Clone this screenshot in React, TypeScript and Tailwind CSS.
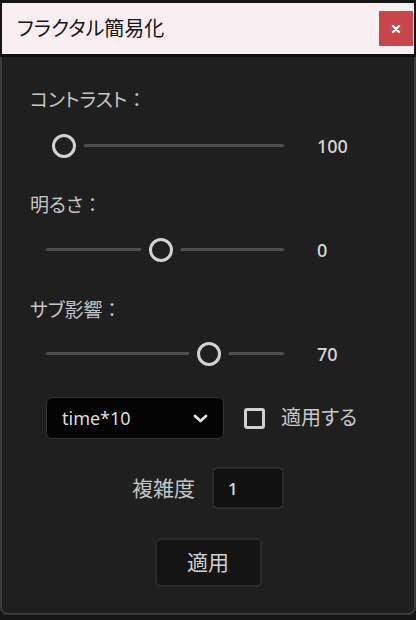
const FONT = "[font-family:'Noto_Sans','Noto_Sans_CJK_JP',sans-serif] [font-feature-settings:'palt']"

interface SliderRowProps {
  fraction: number
  value: string
}

/** Track is 238px wide; thumb centre travels from 18px to 220px */
function SliderRow({ fraction, value }: SliderRowProps) {
  const left = 18 + fraction * 202
  return (
    <div className="flex h-[30px] items-center pl-[44px]">
      <div className="relative h-[30px] w-[238px]">
        <div className="absolute left-0 right-0 top-[13px] h-[3px] rounded-full bg-[#4e4e4e]" />
        <div
          className="absolute top-[3px] h-[24px] w-[24px] -translate-x-1/2 rounded-full border-[3px] border-[#d2d2d2] bg-[#1f1f1f] shadow-[0_0_0_8px_#1f1f1f]"
          style={{ left }}
        />
      </div>
      <span className="ml-[33px] text-[18px] font-medium leading-none text-[#d8d8d8]">{value}</span>
    </div>
  )
}

function Label({ text }: { text: string }) {
  return (
    <div className="pl-[28px] text-[19px] leading-[24px]">
      {text}
      <span className="[font-feature-settings:normal]">：</span>
    </div>
  )
}

export default function App() {
  return (
    <div className={`flex h-[620px] w-[416px] flex-col bg-[#161616] pb-[5px] pt-[3px] ${FONT}`}>
      {/* title bar */}
      <div className="mx-[2px] flex h-[51px] items-center justify-between bg-[#f9eef1] pl-[15px] pr-[1px]">
        <span className="text-[20px] leading-none text-[#151515]">フラクタル簡易化</span>
        <button className="flex h-[35px] w-[34px] items-center justify-center bg-[#c6464b]">
          <svg width="10" height="10" viewBox="0 0 10 10">
            <path d="M2 2 L8 8 M8 2 L2 8" stroke="#ffffff" strokeWidth="2.4" strokeLinecap="round" />
          </svg>
        </button>
      </div>
      <div className="h-[3px] bg-[#0d0d0d]" />

      {/* body */}
      <div className="flex flex-1 flex-col rounded-b-[8px] border-x-2 border-b-2 border-[#3c3c3c] bg-[#1f1f1f] pt-[31px] text-[#c6c6c6]">
        <Label text="コントラスト" />
        <div className="mt-[19px]">
          <SliderRow fraction={0} value="100" />
        </div>

        <div className="mt-[32px]">
          <Label text="明るさ" />
        </div>
        <div className="mt-[18px]">
          <SliderRow fraction={0.48} value="0" />
        </div>

        <div className="mt-[33px]">
          <Label text="サブ影響" />
        </div>
        <div className="mt-[17px]">
          <SliderRow fraction={0.72} value="70" />
        </div>

        {/* select + checkbox */}
        <div className="mt-[28px] flex items-center pl-[44px]">
          <div className="flex h-[42px] w-[178px] items-center justify-between rounded-[6px] border border-[#333333] bg-[#040404] pl-[15px] pr-[15px]">
            <span className="text-[18px] leading-none text-[#dcdcdc]">time*10</span>
            <svg width="15" height="9" viewBox="0 0 15 9">
              <path d="M2 2 L7.5 7 L13 2" fill="none" stroke="#e2e2e2" strokeWidth="2.8" strokeLinecap="round" strokeLinejoin="round" />
            </svg>
          </div>
          <div className="ml-[20px] h-[21px] w-[21px] rounded-[3px] border-[3px] border-[#d0d0d0]" />
          <span className="ml-[16px] text-[20px] leading-none text-[#c8c8c8]">適用する</span>
        </div>

        {/* complexity */}
        <div className="mt-[28px] flex items-center justify-center">
          <span className="text-[21px] leading-none text-[#c6c6c6]">複雑度</span>
          <div className="ml-[17px] flex h-[42px] w-[72px] items-center rounded-[6px] border-2 border-[#2a2a2a] bg-[#111111] pl-[14px]">
            <span className="text-[17px] font-medium leading-none text-[#dedede]">1</span>
          </div>
        </div>

        {/* apply */}
        <div className="mt-[29px] flex justify-center">
          <button className="flex h-[49px] w-[107px] items-center justify-center rounded-[6px] border-2 border-[#2a2a2a] bg-[#141414] text-[21px] leading-none text-[#d0d0d0]">
            適用
          </button>
        </div>
      </div>
    </div>
  )
}
